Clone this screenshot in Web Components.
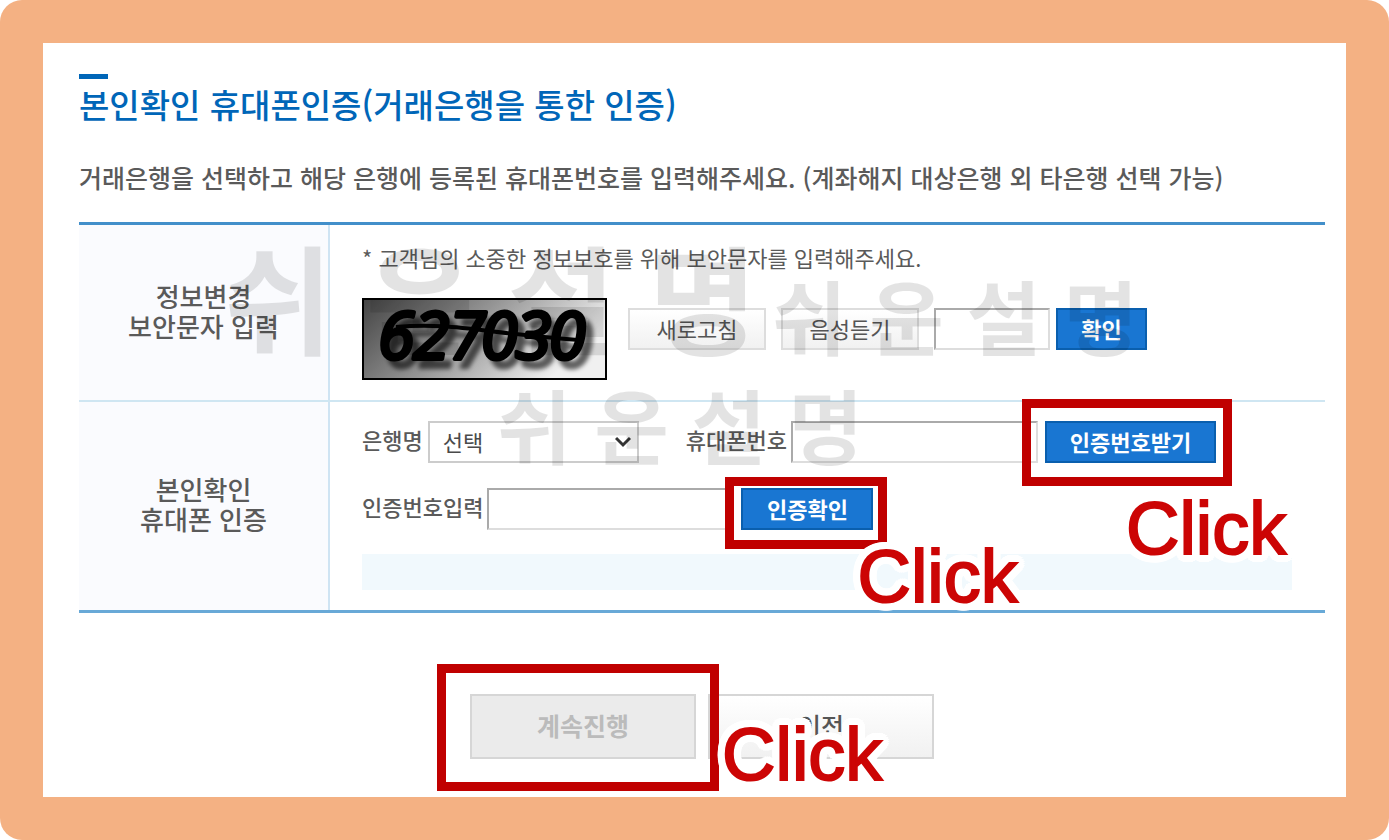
<!DOCTYPE html>
<html lang="ko">
<head>
<meta charset="utf-8">
<meta name="viewport" content="width=device-width, initial-scale=1">
<title>본인확인 휴대폰인증</title>
<style>
  body { margin: 0; background: #fff; font-family: "Noto Sans CJK KR", "Noto Sans", sans-serif; font-weight: 500; color: #5a5a5a; }
</style>
</head>
<body>
<guide-frame>
  <page-title>본인확인 휴대폰인증(거래은행을 통한 인증)</page-title>
  <page-lead>거래은행을 선택하고 해당 은행에 등록된 휴대폰번호를 입력해주세요. (계좌해지 대상은행 외 타은행 선택 가능)</page-lead>
  <verify-form></verify-form>
  <form-actions></form-actions>
</guide-frame>

<script>
const define = (name, html) => {
  const template = document.createElement('template');
  template.innerHTML = html;
  customElements.define(name, class extends HTMLElement {
    constructor() {
      super();
      this.attachShadow({ mode: 'open' }).append(template.content.cloneNode(true));
    }
  });
};

define('guide-frame', `
  <style>
    :host { display: block; box-sizing: border-box; min-height: 100vh; padding: 43px; background: #f4b183; border-radius: 22px; }
    main { padding: 31px 21px 38px 36px; background: #fff; }
  </style>
  <main><slot></slot></main>
`);

define('page-title', `
  <style>
    :host { display: block; color: #0066b8; }
    :host::before { content: ""; display: block; width: 29px; height: 5px; margin-bottom: 4px; background: currentColor; }
    h1 { margin: 0; font-size: 33px; line-height: 42px; font-weight: 500; white-space: nowrap; }
  </style>
  <h1><slot></slot></h1>
`);

define('page-lead', `
  <style>
    :host { display: block; margin-top: 35px; }
    p { margin: 0; font-size: 25px; line-height: 34px; white-space: nowrap; }
  </style>
  <p><slot></slot></p>
`);

/* A heading cell beside a cell of controls */
define('form-row', `
  <style>
    :host { display: grid; grid-template-columns: 251px 1fr; }
    .head { display: flex; align-items: center; justify-content: center; text-align: center; box-sizing: border-box; padding-bottom: 4px;
      border-right: 2px solid #cfe4f3; background: #fafbfe; font-size: 26px; line-height: 30px; white-space: nowrap; }
    .body { padding: var(--row-padding, 20px 33px 20px 32px); font-size: 22px; line-height: 28px; }
  </style>
  <div class="head"><slot name="head"></slot></div>
  <div class="body"><slot></slot></div>
`);

define('push-button', `
  <style>
    :host { display: block; flex: none; }
    button { display: block; box-sizing: border-box; width: 100%; height: 42px; margin: 0; padding: 0 0 3px; border: 2px solid #ddd;
      background: linear-gradient(#fff, #f1f1f1); font: inherit; font-size: 22px; color: #555; white-space: nowrap; }
    :host([kind="primary"]) button { border-color: #0a5fae; background: #1976d2; color: #fff; font-weight: 700; }
    :host([kind="large"]) button, :host([kind="muted"]) button { height: 65px; border-color: #d6d6d6; font-size: 25px; font-weight: 500; }
    :host([kind="muted"]) button { background: #ebebeb; color: #bbb; font-weight: 700; }
  </style>
  <button type="button"><slot></slot></button>
`);

/* Red frame round a control, with a haloed caption beside it */
customElements.define('click-target', class extends HTMLElement {
  constructor() {
    super();
    const halo = [];
    for (let i = 0; i < 32; i++) {
      const a = i * Math.PI / 16;
      halo.push(`${Math.round(8 * Math.cos(a))}px ${Math.round(8 * Math.sin(a))}px 0 #fff`);
      if (i % 4 === 0) halo.push(`${Math.round(4 * Math.cos(a))}px ${Math.round(4 * Math.sin(a))}px 0 #fff`);
    }
    this.attachShadow({ mode: 'open' }).innerHTML = `
      <style>
        :host { display: block; position: relative; z-index: 3; flex: none; }
        .ring { position: absolute; inset: var(--ring); border: 9px solid #c00000; pointer-events: none; }
        .caption { position: absolute; left: var(--caption-x); top: var(--caption-y); font: 74px/74px "Liberation Sans", Arial, sans-serif;
          color: #cc0505; -webkit-text-stroke: 2px #cc0505; text-shadow: ${halo.join(',')}; pointer-events: none; }
      </style>
      <slot></slot>
      <div class="ring"></div>
      <span class="caption">Click</span>`;
  }
});

define('captcha-image', `
  <style>
    :host { display: block; flex: none; width: 245px; height: 82px; }
    svg { display: block; }
  </style>
  <svg width="245" height="82" viewBox="0 0 245 82" role="img" aria-label="보안문자">
    <defs>
      <linearGradient id="g" x1="0" y1="0" x2="1" y2="0.35">
        <stop offset="0" stop-color="#444"/><stop offset=".5" stop-color="#959595"/><stop offset="1" stop-color="#f0f0f0"/>
      </linearGradient>
      <filter id="s" x="-10%" y="-20%" width="130%" height="150%">
        <feDropShadow dx="7" dy="8" stdDeviation="2" flood-color="#000" flood-opacity=".6"/>
      </filter>
    </defs>
    <rect x="1" y="1" width="243" height="80" fill="url(#g)" stroke="#000" stroke-width="2"/>
    <g filter="url(#s)">
      <text x="16 51 87 119 153 187" y="61" font-family="Open Sans" font-weight="400" font-style="italic" font-size="66"
        fill="#000" stroke="#000" stroke-width="4" stroke-linejoin="round">627030</text>
      <path d="M34 29C90 24 120 35 217 42" fill="none" stroke="#000" stroke-width="4"/>
    </g>
  </svg>
`);

define('water-mark', `
  <style>
    :host { position: absolute; z-index: 2; color: rgba(0, 0, 0, .11); font-weight: 700; line-height: 1; white-space: nowrap; pointer-events: none; }
  </style>
  <slot></slot>
`);

define('verify-form', `
  <style>
    :host { display: block; position: relative; margin-top: 28px; border-top: 3px solid #428fca; border-bottom: 3px solid #68a9d7; }
    form-row + form-row { border-top: 2px solid #cfe6f2; }
    .security { --row-padding: 18px 33px 20px 32px; }
    .phone { --row-padding: 19px 33px 20px 32px; }
    p { margin: 0 0 27px; font-weight: 400; }
    .line { display: flex; align-items: flex-start; }
    .line + .line { margin-top: 25px; }
    .line > * { flex: none; }
    label { line-height: 36px; white-space: nowrap; }
    .controls { display: flex; padding: 10px 0 0 21px; }
    .controls > push-button { width: 138px; margin-right: 15px; font-weight: 400; }
    .controls > .ok { width: 91px; margin: 0 0 0 6px; }
    input, select { box-sizing: border-box; height: 42px; margin: 0; border: 2px solid #ddd; border-top-color: #aaa; border-left-color: #aaa;
      border-radius: 0; background: #fff; font: inherit; color: #4a4a4a; }
    .code { width: 116px; }
    .wide { width: 247px; margin: 0 7px 0 4px; }
    .pick { position: relative; margin: 0 47px 0 5px; }
    select { display: block; width: 211px; padding: 0 13px 2px; border-color: #ccc; appearance: none; font-weight: 400; }
    .pick svg { position: absolute; right: 8px; top: 15px; pointer-events: none; }
    .notice { height: 36px; margin-top: 24px; background: #f1f9fd; }
    .receive { width: 171px; --ring: -22px -16px -23px -23px; --caption-x: 81px; --caption-y: 71px; }
    .check { width: 132px; --ring: -11px -14px -19px -16px; --caption-x: 116px; --caption-y: 52px; }
    water-mark { font-size: 81px; }
    .w1 { font-size: 118px; left: 145px; top: 11px; }
    .w2 { left: 693px; top: 48px; }
    .w3 { left: 418px; top: 157px; }
  </style>
  <form-row class="security">
    <div slot="head">정보변경<br>보안문자 입력</div>
    <p>* 고객님의 소중한 정보보호를 위해 보안문자를 입력해주세요.</p>
    <div class="line">
      <captcha-image></captcha-image>
      <div class="controls">
        <push-button>새로고침</push-button>
        <push-button>음성듣기</push-button>
        <input class="code" type="text" aria-label="보안문자 입력">
        <push-button class="ok" kind="primary">확인</push-button>
      </div>
    </div>
  </form-row>
  <form-row class="phone">
    <div slot="head">본인확인<br>휴대폰 인증</div>
    <div class="line">
      <label for="bank">은행명</label>
      <div class="pick">
        <select id="bank"><option>선택</option></select>
        <svg width="16" height="12" viewBox="0 0 16 12"><path d="M1 2 8 9 15 2" fill="none" stroke="#333" stroke-width="3"/></svg>
      </div>
      <label for="phone">휴대폰번호</label>
      <input class="wide" id="phone" type="tel">
      <click-target class="receive"><push-button kind="primary">인증번호받기</push-button></click-target>
    </div>
    <div class="line">
      <label for="otp">인증번호입력</label>
      <input class="wide" id="otp" type="text">
      <click-target class="check"><push-button kind="primary">인증확인</push-button></click-target>
    </div>
    <div class="notice"></div>
  </form-row>
  <water-mark class="w1">쉬 운 설 명</water-mark>
  <water-mark class="w2">쉬 운 설 명</water-mark>
  <water-mark class="w3">쉬 운 설 명</water-mark>
`);

define('form-actions', `
  <style>
    :host { display: flex; justify-content: center; gap: 12px; margin-top: 81px; }
    push-button { width: 226px; }
    click-target { --ring: -30px -23px -32px -33px; --caption-x: 252px; --caption-y: 24px; }
  </style>
  <click-target><push-button kind="muted">계속진행</push-button></click-target>
  <push-button kind="large">이전</push-button>
`);
</script>
</body>
</html>
